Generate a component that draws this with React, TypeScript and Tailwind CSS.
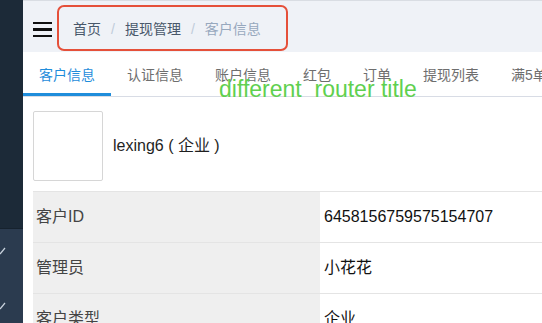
const TABS = ['客户信息', '认证信息', '账户信息', '红包', '订单', '提现列表', '满5单']

const ROWS = [
  { label: '客户ID', value: '6458156759575154707' },
  { label: '管理员', value: '小花花' },
  { label: '客户类型', value: '企业' },
]

function Tick() {
  return (
    <svg width="6" height="8" viewBox="0 0 6 8" className="block">
      <path d="M0 7 L5 1" stroke="#c9d3de" strokeWidth="1.2" fill="none" />
    </svg>
  )
}

export default function App() {
  return (
    <div
      className="flex h-[323px] w-[542px] overflow-hidden bg-white"
      style={{ fontFamily: '"Liberation Sans", "Noto Sans CJK SC", sans-serif' }}
    >
      {/* sidebar */}
      <div className="flex w-[23px] shrink-0 flex-col">
        <div className="h-[228px] bg-[#1c2a38]" />
        <div className="flex flex-1 flex-col border-t border-[#16222e] bg-[#2b3b4f] pt-[18px]">
          <Tick />
          <div className="h-[47px]" />
          <Tick />
        </div>
      </div>

      <div className="relative flex min-w-0 flex-1 flex-col">
        {/* header */}
        <div className="flex h-[52px] shrink-0 items-center border-t border-[#d9dde3] bg-[#eff2f7] pl-[10px]">
          <div className="mt-[6px] flex w-[19px] flex-col gap-[4px]">
            <span className="h-[2.5px] bg-[#111]" />
            <span className="h-[2.5px] bg-[#111]" />
            <span className="h-[2.5px] bg-[#111]" />
          </div>
          <div className="ml-[5px] mt-[2px] flex h-[46px] w-[231px] items-center rounded-[7px] border-2 border-[#e5503a] pl-[14px] pt-[3px] text-[14px]">
            <span className="text-[#48576a]">首页</span>
            <span className="mx-[10px] text-[#c0ccda]">/</span>
            <span className="text-[#48576a]">提现管理</span>
            <span className="mx-[10px] text-[#c0ccda]">/</span>
            <span className="text-[#97a8be]">客户信息</span>
          </div>
        </div>

        {/* tabs */}
        <div className="flex h-[45px] shrink-0 border-b border-[#d8dce5] text-[14px]">
          {TABS.map((t, i) => (
            <div
              key={t}
              className={
                i === 0
                  ? 'flex shrink-0 items-center border-b-[3px] border-[#1f8ddb] px-[16px] pt-[6px] text-[#1f8ddb]'
                  : 'flex shrink-0 items-center border-b-[3px] border-transparent px-[16px] pt-[6px] text-[#6e6e6e]'
              }
            >
              {t}
            </div>
          ))}
        </div>

        <div className="pointer-events-none absolute left-[196px] top-[78px] whitespace-pre text-[23px] leading-none text-[#5fd04f]">
          different  router title
        </div>

        {/* content */}
        <div className="flex flex-col pl-[10px] pt-[14px]">
          <div className="flex items-center">
            <div className="h-[70px] w-[70px] rounded-[2px] border border-[#d6d6d6]" />
            <span className="ml-[10px] text-[16px] text-[#1f1f1f]">lexing6 ( 企业 )</span>
          </div>
          <div className="mt-[10px] border-t border-[#e4e4e4]">
            {ROWS.map(r => (
              <div key={r.label} className="flex h-[51px] border-b border-[#e4e4e4] text-[16px]">
                <div className="flex w-[287px] shrink-0 items-center bg-[#efefef] pl-[3px] text-[#444]">{r.label}</div>
                <div className="flex flex-1 items-center pl-[4px] text-[#111]">{r.value}</div>
              </div>
            ))}
          </div>
        </div>
      </div>
    </div>
  )
}
